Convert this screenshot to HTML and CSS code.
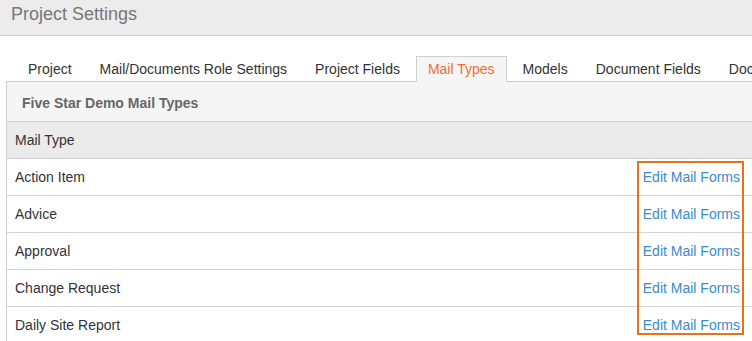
FILE: index.html
```html
<!DOCTYPE html>
<html>
<head>
<meta charset="utf-8">
<link rel="stylesheet" href="styles.css">
</head>
<body>
<div class="page-header"><h1 class="title">Project Settings</h1></div>
<div class="main">
  <ul class="tabs">
    <li class="tab">Project</li>
    <li class="tab">Mail/Documents Role Settings</li>
    <li class="tab">Project Fields</li>
    <li class="tab active">Mail Types</li>
    <li class="tab">Models</li>
    <li class="tab">Document Fields</li>
    <li class="tab">Document Types</li>
  </ul>
  <div class="panel">
    <div class="panel-heading">Five Star Demo Mail Types</div>
    <div class="row head"><span>Mail Type</span></div>
    <div class="row"><span>Action Item</span><a class="link">Edit Mail Forms</a></div>
    <div class="row"><span>Advice</span><a class="link">Edit Mail Forms</a></div>
    <div class="row"><span>Approval</span><a class="link">Edit Mail Forms</a></div>
    <div class="row"><span>Change Request</span><a class="link">Edit Mail Forms</a></div>
    <div class="row"><span>Daily Site Report</span><a class="link">Edit Mail Forms</a></div>
  </div>
  <div class="highlight"></div>
</div>
</body>
</html>
```
FILE: styles.css
```css
html, body {
  margin: 0;
  padding: 0;
  overflow: hidden;
  background: #fff;
  font-family: "Liberation Sans", Arial, sans-serif;
  font-size: 14px;
  color: #333;
}
.page-header {
  height: 35px;
  background: #ececec;
  border-bottom: 1px solid #cfcfcf;
}
.title {
  margin: 0;
  padding-left: 11px;
  font-size: 18px;
  font-weight: normal;
  line-height: 28px;
  color: #777;
}
.main {
  position: relative;
  padding: 20px 0 0 6px;
  width: 747px;
}
.tabs {
  list-style: none;
  margin: 0 0 -1px 10px;
  padding: 0;
  display: flex;
  gap: 4px;
  white-space: nowrap;
  position: relative;
  z-index: 1;
}
.tab {
  flex: none;
  border: 1px solid transparent;
  padding: 3px 11px;
  line-height: 18px;
  color: #333;
}
.tab.active {
  border-color: #cfcfcf;
  border-bottom-color: #f5f5f5;
  background: #f5f5f5;
  color: #f0702a;
}
.panel {
  border: 1px solid #cfcfcf;
  border-bottom: none;
}
.panel-heading {
  height: 35px;
  line-height: 35px;
  padding: 4px 0 0 15px;
  background: #f5f5f5;
  border-bottom: 1px solid #cfcfcf;
  font-weight: bold;
  color: #666;
}
.row {
  display: flex;
  justify-content: space-between;
  align-items: center;
  height: 36px;
  padding: 0 12px 0 8px;
  border-bottom: 1px solid #d4d4d4;
}
.row.head {
  background: #ebebeb;
  border-bottom-color: #cfcfcf;
}
.link {
  color: #3a8bcd;
}
.highlight {
  position: absolute;
  left: 637px;
  top: 125px;
  width: 103px;
  height: 170px;
  border: 2px solid #e8711c;
}
```
